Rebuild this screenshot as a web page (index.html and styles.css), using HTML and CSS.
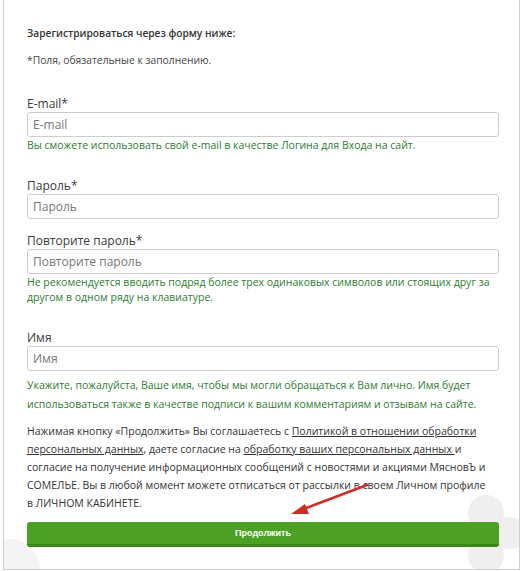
FILE: index.html
```html
<!DOCTYPE html>
<html lang="ru">
<head>
  <meta charset="UTF-8" />
  <title>Регистрация</title>
  <meta name="viewport" content="width=device-width, initial-scale=1.0" />
  <link rel="stylesheet" href="styles.css">
</head>
<body>
  <div class="frame">
    <svg class="clover" width="80" height="90" viewBox="0 0 80 90">
      <circle cx="40" cy="18" r="18" fill="#efefef" />
      <circle cx="64" cy="38" r="16" fill="#efefef" />
      <circle cx="40" cy="60" r="18" fill="#efefef" />
      <circle cx="34" cy="38" r="10" fill="#efefef" />
    </svg>
    <svg class="leaf" width="40" height="40" viewBox="0 0 40 40">
      <circle cx="6" cy="40" r="30" fill="#f4f4f4" />
    </svg>
    <form class="reg-form">
      <p class="title">Зарегистрироваться через форму ниже:</p>
      <p class="note">*Поля, обязательные к заполнению.</p>

      <div class="field first">
        <label>E-mail*</label>
        <input type="text" placeholder="E-mail" />
        <p class="hint">Вы сможете использовать свой e-mail в качестве Логина для Входа на сайт.</p>
      </div>

      <div class="field">
        <label>Пароль*</label>
        <input type="password" placeholder="Пароль" />
      </div>

      <div class="field near">
        <label>Повторите пароль*</label>
        <input type="password" placeholder="Повторите пароль" />
        <p class="hint">Не рекомендуется вводить подряд более трех одинаковых символов или стоящих друг за другом в одном ряду на клавиатуре.</p>
      </div>

      <div class="field">
        <label>Имя</label>
        <input type="text" placeholder="Имя" />
        <p class="hint spaced">Укажите, пожалуйста, Ваше имя, чтобы мы могли обращаться к Вам лично. Имя будет использоваться также в качестве подписи к вашим комментариям и отзывам на сайте.</p>
      </div>

      <p class="consent">Нажимая кнопку «Продолжить» Вы соглашаетесь с <a href="#">Политикой в отношении обработки персональных данных</a>, даете согласие на <a href="#">обработку ваших персональных данных </a>и согласие на получение информационных сообщений с новостями и акциями МясновЪ и СОМЕЛЬЕ. Вы в любой момент можете отписаться от рассылки в своем Личном профиле в ЛИЧНОМ КАБИНЕТЕ.</p>

      <button type="submit">Продолжить</button>
    </form>
    <svg class="arrow" width="90" height="40" viewBox="0 0 90 40">
      <line x1="80" y1="4" x2="14" y2="29" stroke="#d42a22" stroke-width="2.5" stroke-linecap="round" />
      <polygon points="4,33 18,23 22,33" fill="#d42a22" />
    </svg>
  </div>
</body>
</html>
```

FILE: styles.css
```css
body { margin: 0; background: #fff; font-family: "Open Sans", "Noto Sans", sans-serif; color: #333; }
.frame { position: relative; margin-left: 3px; width: 517px; height: 570px; box-sizing: border-box; border: 1px solid #cfcfcf; border-top: none; overflow: hidden; }
.reg-form { position: relative; padding: 25px 0 0 23px; width: 472px; }
p { margin: 0; }
.title { font-size: 10.2px; font-weight: 600; line-height: 16px; color: #333; }
.note { font-size: 10.3px; line-height: 16px; margin-top: 11px; color: #444; }
.field { margin-top: 24px; }
.field.first { margin-top: 27px; }
.field.near { margin-top: 13px; }
label { display: block; font-size: 12px; line-height: 17px; color: #3a3a3a; }
input { display: block; width: 100%; height: 25px; box-sizing: border-box; margin: 0; padding: 0 5px; border: 1px solid #cdcdcd; border-radius: 3px; font-family: inherit; font-size: 12px; color: #333; background: #fff; }
input::placeholder { color: #777; }
.hint { font-size: 10.5px; line-height: 15px; color: #2e7d32; margin-top: 1px; }
.hint.spaced { margin-top: 5px; line-height: 19px; }
.consent { font-size: 10.5px; line-height: 18px; color: #333; margin-top: 8px; padding-right: 6px; }
.consent a { color: #333; text-decoration: underline; }
button { display: block; width: 100%; height: 25px; margin-top: 10px; border: none; border-bottom: 3px solid #3a8619; border-radius: 3px; background: #4ca125; color: #fff; font-family: "Liberation Sans", sans-serif; font-size: 9px; font-weight: bold; cursor: pointer; }
.clover { position: absolute; left: 442px; top: 495px; }
.leaf { position: absolute; left: 0; bottom: 0; }
.arrow { position: absolute; left: 283px; top: 481px; }
```
